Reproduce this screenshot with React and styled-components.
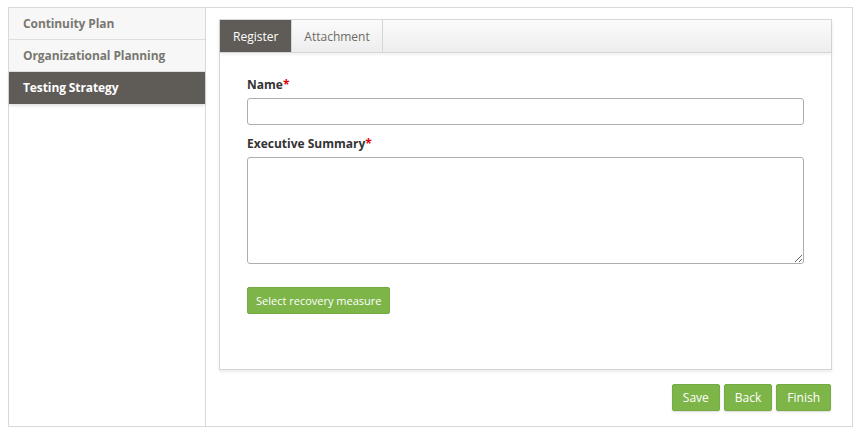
import React from 'react'
import styled, { createGlobalStyle } from 'styled-components'

const GlobalStyle = createGlobalStyle`
  body {
    margin: 0;
    background: #ffffff;
    font-family: "Open Sans", "Liberation Sans", sans-serif;
  }
  * { box-sizing: border-box; }
`

const Frame = styled.div`
  display: flex;
  margin: 7px 0 0 8px;
  width: 845px;
  height: 420px;
  border: 1px solid #d9d9d9;
`

const Sidebar = styled.nav`
  width: 197px;
  flex-shrink: 0;
  border-right: 1px solid #d9d9d9;
  display: flex;
  flex-direction: column;
`

const NavItem = styled.div`
  height: 32px;
  display: flex;
  align-items: center;
  padding-left: 14px;
  font-size: 12px;
  font-weight: 700;
  letter-spacing: -0.1px;
  color: ${p => (p.$active ? '#ffffff' : '#7a7772')};
  background: ${p => (p.$active ? '#5f5c57' : '#f7f7f7')};
  border-bottom: 1px solid ${p => (p.$active ? '#5f5c57' : '#dedede')};
  box-shadow: ${p => (p.$active ? '0 2px 3px rgba(0,0,0,0.12)' : 'none')};
`

const Main = styled.main`
  flex: 1;
  padding: 11px 20px 0 13px;
  display: flex;
  flex-direction: column;
`

const Card = styled.section`
  height: 351px;
  border: 1px solid #d6d6d6;
  box-shadow: 0 2px 3px rgba(0,0,0,0.08);
  display: flex;
  flex-direction: column;
`

const TabBar = styled.div`
  display: flex;
  height: 33px;
  background: linear-gradient(#fbfbfb, #ededed);
  border-bottom: 1px solid #d6d6d6;
  box-shadow: 0 2px 3px rgba(0,0,0,0.06);
`

const Tab = styled.div`
  display: flex;
  align-items: center;
  padding: 0 ${p => (p.$active ? '13px' : '12px')};
  font-size: 12px;
  color: ${p => (p.$active ? '#ffffff' : '#6e6b66')};
  background: ${p => (p.$active ? '#5f5c57' : 'transparent')};
  border-right: 1px solid #d6d6d6;
`

const Body = styled.div`
  padding: 24px 27px 0 27px;
  display: flex;
  flex-direction: column;
`

const Field = styled.div`
  display: flex;
  flex-direction: column;
  margin-bottom: 11px;
`

const Label = styled.label`
  font-size: 12px;
  font-weight: 700;
  color: #333333;
  line-height: 16px;
  margin-bottom: 5px;
`

const Required = styled.span`
  color: #e0000a;
`

const TextInput = styled.input`
  height: 27px;
  border: 1px solid #a9b0ae;
  border-radius: 3px;
  font-family: inherit;
  font-size: 13px;
  padding: 0 6px;
`

const TextArea = styled.textarea`
  height: 107px;
  border: 1px solid #a9b0ae;
  border-radius: 3px;
  font-family: inherit;
  font-size: 13px;
  resize: vertical;
`

const ButtonRow = styled.div`
  margin-top: 12px;
`

const GreenButton = styled.button`
  height: 27px;
  padding: 0 ${p => p.$pad || '8px'};
  background: #7db549;
  border: 1px solid #74ab42;
  border-radius: 2px;
  color: #ffffff;
  font-family: inherit;
  font-size: ${p => p.$size || '11px'};
  cursor: pointer;
`

const Actions = styled.div`
  display: flex;
  justify-content: flex-end;
  gap: 4px;
  margin-top: 14px;
  padding-right: 1px;
  & > button {
    box-shadow: 0 1px 2px rgba(0,0,0,0.15);
  }
`

export default function App() {
  return (
    <>
      <GlobalStyle />
      <Frame>
        <Sidebar>
          <NavItem>Continuity Plan</NavItem>
          <NavItem>Organizational Planning</NavItem>
          <NavItem $active>Testing Strategy</NavItem>
        </Sidebar>
        <Main>
          <Card>
            <TabBar>
              <Tab $active>Register</Tab>
              <Tab>Attachment</Tab>
            </TabBar>
            <Body>
              <Field>
                <Label>Name<Required>*</Required></Label>
                <TextInput />
              </Field>
              <Field>
                <Label>Executive Summary<Required>*</Required></Label>
                <TextArea />
              </Field>
              <ButtonRow>
                <GreenButton>Select recovery measure</GreenButton>
              </ButtonRow>
            </Body>
          </Card>
          <Actions>
            <GreenButton $size="12px" $pad="10px">Save</GreenButton>
            <GreenButton $size="12px" $pad="10px">Back</GreenButton>
            <GreenButton $size="12px" $pad="10px">Finish</GreenButton>
          </Actions>
        </Main>
      </Frame>
    </>
  )
}
